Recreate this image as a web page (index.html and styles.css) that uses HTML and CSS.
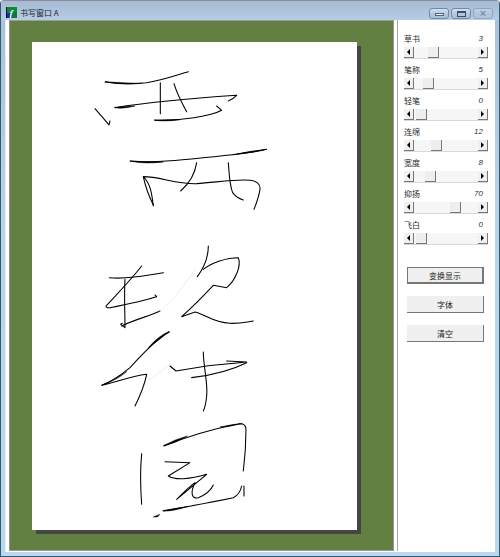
FILE: index.html
```
<!DOCTYPE html>
<html lang="zh">
<head>
<meta charset="utf-8">
<title>书写窗口 A</title>
<link rel="stylesheet" href="styles.css">
</head>
<body>
<div class="window">
  <header class="titlebar">
    <svg class="appicon" viewBox="0 0 11 11"><rect width="11" height="11" fill="#0a2fb0"/><rect x="1" width="10" height="6" fill="#0b8a3a"/><rect x="6" y="5" width="5" height="6" fill="#0a7a38"/><rect width="1" height="11" fill="#111"/><text class="appicon-f" x="3.5" y="9.5">f</text></svg>
    <span class="title">书写窗口 A</span>
    <div class="caption">
      <div class="capbtn"><span class="glyph-min"></span></div>
      <div class="capbtn"><span class="glyph-max"></span></div>
      <div class="capbtn capclose"><span class="glyph-x">×</span></div>
    </div>
  </header>
  <div class="client">
    <main class="stage">
      <div class="page">
        <svg class="ink" viewBox="32 41 325 488">
          <g transform="translate(80 60) scale(.3333)">
            <path class="s" d="M75 63C120 70 170 68 200 65C245 58 290 42 325 32"/>
            <path class="h" d="M75 62Q125 73 185 67Q125 66 75 62Z"/>
            <path class="s" d="M241 65L241 158"/>
            <path class="s" d="M282 68C290 95 305 125 320 152"/>
            <path class="s" d="M105 140C200 125 340 112 470 103Q458 115 445 120"/>
            <path class="h" d="M103 139Q120 146 165 135Q130 136 103 139Z"/>
            <path class="s" d="M45 143C60 160 75 178 87 192L90 180"/>
            <path class="s" d="M410 135L425 148C395 165 300 180 225 178"/>
            <path class="h" d="M222 177Q250 183 300 176Q260 177 222 177Z"/>
            <path class="s" d="M150 300C220 308 330 295 450 282C490 277 530 272 560 265"/>
            <path class="h" d="M150 300Q190 310 250 303Q200 303 150 300ZM470 279Q520 276 560 265Q510 270 470 279Z"/>
            <path class="s" d="M350 305C345 340 325 370 302 390"/>
            <path class="s" d="M445 305C448 340 448 370 458 395Q468 410 490 417"/>
            <path class="s" d="M220 435C215 395 212 370 190 347C240 347 290 370 350 368C410 364 470 354 510 358C530 360 542 370 540 385C537 405 530 425 522 445"/>
            <path class="s" d="M190 348C196 375 206 405 220 432"/>
          </g>
          <g transform="translate(80 225) scale(.3333)">
            <path class="s" d="M88 155C130 160 190 150 250 140"/>
            <path class="s" d="M185 120C150 165 110 205 78 240Q78 246 90 245C140 235 190 225 230 212L225 207"/>
            <path class="s" d="M135 160C132 210 135 260 135 305L122 295L127 292"/>
            <path class="s" d="M125 300C165 280 210 270 240 255"/>
            <path class="f" d="M240 255C280 225 310 180 345 130"/>
            <path class="s" d="M385 60C385 90 372 125 352 152"/>
            <path class="s" d="M370 130C395 110 440 95 475 95C485 120 465 165 440 185L400 178C370 210 335 245 305 272L345 258C375 265 400 290 450 292C480 293 500 288 520 285"/>
            <path class="s" d="M268 318C235 335 195 375 150 425C120 450 90 468 65 478C100 472 150 450 200 445C195 470 180 510 165 540"/>
            <path class="h" d="M268 316Q235 330 205 365Q240 340 268 316ZM140 437Q100 465 65 478Q110 462 140 437Z"/>
            <path class="f" d="M205 465L270 415"/>
            <path class="s" d="M270 420L288 435C320 430 350 425 380 420C420 415 470 412 500 408L440 405"/>
            <path class="s" d="M335 455C390 448 450 435 500 410"/>
            <path class="s" d="M370 378C370 420 385 480 380 510C378 530 375 545 370 555"/>
          </g>
          <g transform="translate(100 410) scale(.3333)">
            <path class="s" d="M192 105C240 85 330 55 420 38Q438 38 438 55C438 100 435 140 430 180"/>
            <path class="h" d="M190 104Q225 98 262 75Q225 85 190 104ZM360 48Q395 46 428 37Q395 40 360 48Z"/>
            <path class="s" d="M125 128C120 180 122 240 125 280"/>
            <path class="h" d="M160 318L180 310L172 318Z"/>
            <path class="s" d="M190 300C260 288 340 272 400 260Q420 250 425 225"/>
            <path class="h" d="M188 299Q210 304 265 286Q225 292 188 299Z"/>
            <path class="s" d="M432 225L432 255"/>
            <path class="s" d="M195 152L270 155L205 195C225 208 270 205 320 190L230 265C250 245 270 225 285 215C270 245 275 265 295 260C320 250 332 240 340 222"/>
          </g>
        </svg>
      </div>
    </main>
    <aside class="panel">
      <div class="sliders">
        <div class="setting"><div class="label-row"><span>草书</span><i>3</i></div><div class="scroll"><span class="arrow left"></span><div class="trough"><span class="thumb" style="margin-left:14px"></span></div><span class="arrow right"></span></div></div>
        <div class="setting"><div class="label-row"><span>笔称</span><i>5</i></div><div class="scroll"><span class="arrow left"></span><div class="trough"><span class="thumb" style="margin-left:9px"></span></div><span class="arrow right"></span></div></div>
        <div class="setting"><div class="label-row"><span>轻笔</span><i>0</i></div><div class="scroll"><span class="arrow left"></span><div class="trough"><span class="thumb" style="margin-left:2px"></span></div><span class="arrow right"></span></div></div>
        <div class="setting"><div class="label-row"><span>连绵</span><i>12</i></div><div class="scroll"><span class="arrow left"></span><div class="trough"><span class="thumb" style="margin-left:17px"></span></div><span class="arrow right"></span></div></div>
        <div class="setting"><div class="label-row"><span>宽度</span><i>8</i></div><div class="scroll"><span class="arrow left"></span><div class="trough"><span class="thumb" style="margin-left:11px"></span></div><span class="arrow right"></span></div></div>
        <div class="setting"><div class="label-row"><span>抑扬</span><i>70</i></div><div class="scroll"><span class="arrow left"></span><div class="trough"><span class="thumb" style="margin-left:36px"></span></div><span class="arrow right"></span></div></div>
        <div class="setting"><div class="label-row"><span>飞白</span><i>0</i></div><div class="scroll"><span class="arrow left"></span><div class="trough"><span class="thumb" style="margin-left:2px"></span></div><span class="arrow right"></span></div></div>
      </div>
      <div class="buttons">
        <button class="btn btn-default">变换显示</button>
        <button class="btn">字体</button>
        <button class="btn">清空</button>
      </div>
    </aside>
  </div>
</div>
</body>
</html>
```
FILE: styles.css
```
* { box-sizing: border-box; }
html, body { margin: 0; height: 100%; }
body { font-family: "Noto Sans CJK SC", "Liberation Sans", sans-serif; font-size: 8px; color: #222; overflow: hidden; }
.window {
  width: 500px; height: 557px; display: flex; flex-direction: column;
  background: linear-gradient(#a9c0da, #b8d4ea 40%, #bcd8ee);
  border: 1px solid #2f5f6e; border-top-color: #8a8f96; padding: 0 4px 4px;
  border-radius: 4px 4px 0 0;
}
.titlebar { height: 19px; flex: none; display: flex; align-items: center; background: linear-gradient(#a6bad4, #b6cde4); margin: 0 -4px; padding: 3px 6px 0 5px; }
.appicon { width: 11px; height: 11px; flex: none; }
.appicon-f { font: italic bold 10px "Liberation Serif", serif; fill: #fff; }
.title { margin-left: 3px; font-size: 8px; color: #1c2430; }
.caption { margin-left: auto; display: flex; gap: 2px; align-self: flex-start; margin-top: 4px; }
.capbtn { width: 20px; height: 11px; border: 1px solid #7189a5; border-radius: 3px; background: linear-gradient(#d5e2f0, #b4c9e0 50%, #a9c0da); display: flex; align-items: center; justify-content: center; }
.capclose { opacity: .5; }
.glyph-min { width: 9px; height: 3px; background: #eef3f8; border: 1px solid #56667a; margin-top: 2px; }
.glyph-max { width: 9px; height: 6px; background: transparent; border: 2px solid #3f4f63; border-width: 2px 1px 1px; }
.glyph-x { font: bold 11px/9px "Liberation Sans", sans-serif; color: #4a5a6c; }
.client { flex: 1; display: flex; min-height: 0; background: #fff; padding-bottom: 1px; border-left: 1px solid #e8edf2; }
.stage { width: 385px; flex: none; background: #647f42; border: 1px solid #9a9a9a; border-left-color: #8f8f8f; padding: 21px 0 0 22px; margin-left: 3px; }
.page { width: 325px; height: 488px; background: #fff; box-shadow: 4px 4px 0 #454545; }
.ink { display: block; width: 325px; height: 488px; }
.s, .f { fill: none; stroke: #000; stroke-linecap: round; stroke-linejoin: round; }
.h { fill: #000; stroke: #000; stroke-width: 1.5; stroke-linejoin: round; }
.s { stroke-width: 3.2; }
.f { stroke-width: 2; stroke: #e4e4e4; }
.panel { flex: 1; background: #fff; border-left: 1px solid #a8a8a8; margin-left: 3px; padding: 12px 1px 0 6px; display: flex; flex-direction: column; }
.sliders { display: flex; flex-direction: column; gap: 5px; }
.setting { height: 26px; display: flex; flex-direction: column; }
.label-row { height: 13px; width: 84px; display: flex; justify-content: space-between; align-items: center; padding-right: 5px; line-height: 13px; color: #2a2a2a; }
.label-row i { font-family: "Liberation Sans", sans-serif; font-style: italic; color: #333; }
.scroll { height: 11px; display: flex; background: #f1f1f1; box-shadow: 0 1px 0 #d8d8d8; margin-top: 2px; width: 84px; }
.arrow { width: 10px; flex: none; background: #f0f0f0; border-right: 1px solid #777; border-bottom: 1px solid #777; position: relative; }
.arrow::after { content: ""; position: absolute; top: 2px; border: 3px solid transparent; }
.left::after { left: 0; border-right-color: #000; }
.right::after { left: 3px; border-left-color: #000; }
.trough { flex: 1; display: flex; background: #f6f6f6; }
.thumb { width: 11px; height: 11px; background: #eeeeee; border-right: 1px solid #777; border-bottom: 1px solid #777; display: block; }
.buttons { display: flex; flex-direction: column; gap: 12px; margin-top: 23px; padding-left: 3px; }
.btn { width: 77px; height: 17px; padding: 0; background: #f0f0f0; font: inherit; color: #222; border: 0; border-right: 1px solid #777; border-bottom: 1px solid #777; }
.btn-default { border: 1px solid #777; border-width: 1px 2px 2px 1px; }
```
